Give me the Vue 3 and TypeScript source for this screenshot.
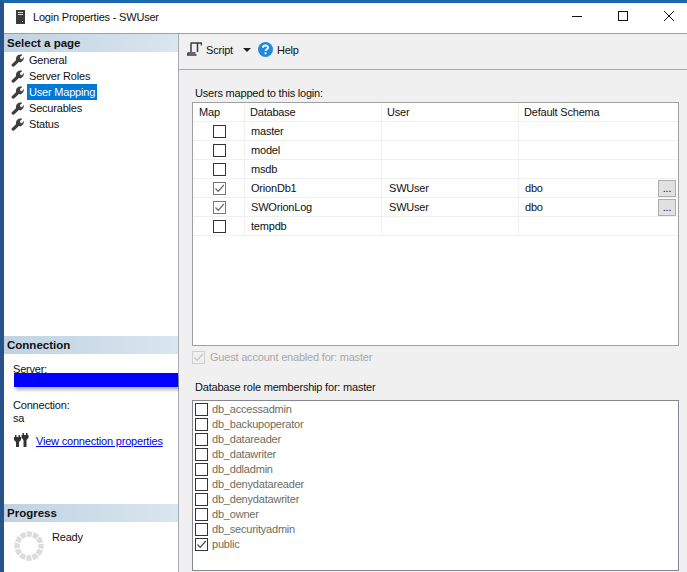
<script setup lang="ts">
const pages = ['General', 'Server Roles', 'User Mapping', 'Securables', 'Status']
const rows = [
  { map: false, db: 'master', user: '', schema: '' },
  { map: false, db: 'model', user: '', schema: '' },
  { map: false, db: 'msdb', user: '', schema: '' },
  { map: true, db: 'OrionDb1', user: 'SWUser', schema: 'dbo' },
  { map: true, db: 'SWOrionLog', user: 'SWUser', schema: 'dbo' },
  { map: false, db: 'tempdb', user: '', schema: '' },
]
const roles = [
  { name: 'db_accessadmin', on: false },
  { name: 'db_backupoperator', on: false },
  { name: 'db_datareader', on: false },
  { name: 'db_datawriter', on: false },
  { name: 'db_ddladmin', on: false },
  { name: 'db_denydatareader', on: false },
  { name: 'db_denydatawriter', on: false },
  { name: 'db_owner', on: false },
  { name: 'db_securityadmin', on: false },
  { name: 'public', on: true },
]
</script>

<template>
  <div class="window">
    <header class="titlebar">
      <svg class="app-icon" width="9" height="14" viewBox="0 0 9 14">
        <rect width="9" height="14" fill="#3c3c3c" />
        <rect x="2" y="2" width="5" height="1" fill="#ddd" />
        <rect x="2" y="4" width="5" height="1" fill="#ddd" />
        <rect x="6" y="11" width="1" height="1" fill="#fff" />
      </svg>
      <span class="title">Login Properties - SWUser</span>
      <div class="win-btns">
        <svg width="12" height="12" viewBox="0 0 12 12"><path d="M1 6.500h10" stroke="#111" fill="none" /></svg>
        <svg width="12" height="12" viewBox="0 0 12 12"><rect x="1.500" y="1.500" width="9" height="9" stroke="#111" fill="none" /></svg>
        <svg width="12" height="12" viewBox="0 0 12 12"><path d="M1 1l10 10M11 1L1 11" stroke="#111" fill="none" /></svg>
      </div>
    </header>
    <div class="body">
      <aside class="sidebar">
        <div class="section-head">Select a page</div>
        <ul class="pages">
          <li v-for="p in pages" :key="p" class="page">
            <svg width="13" height="13" viewBox="0 0 13 13" class="wrench">
              <path d="M.6 10.600 L5 6.300 C4.500 3.600 6 .8 9 .6 C10 .5 10.800 .7 11.400 1 L8.800 3 L9.400 4.800 L11 5.200 L12.700 2.800 C13.300 5.800 11 8.800 7.600 8.300 L3.200 12.600 C2 13.200 0 12 .6 10.600 Z" fill="#3f3f3f" />
            </svg>
            <span :class="{ selected: p === 'User Mapping' }">{{ p }}</span>
          </li>
        </ul>
        <div class="spacer"></div>
        <div class="section-head">Connection</div>
        <div class="conn">
          <div class="label">Server:</div>
          <div class="redact"></div>
          <div class="label conn-label">Connection:</div>
          <div class="label">sa</div>
          <div class="link-row">
            <svg width="15" height="15" viewBox="0 0 15 15">
              <path d="M0 4h7v3L5 9v5H2V9L0 7z M1 2h1.500v2H1z M4.500 2H6v2H4.500z" fill="#333" />
              <path d="M7.500 2h7v3l-2 2v7h-3V7l-2-2z M8.500 0H10v2H8.500z M12 0h1.500v2H12z" fill="#333" />
            </svg>
            <a class="link">View connection properties</a>
          </div>
        </div>
        <div class="section-head">Progress</div>
        <div class="progress">
          <svg width="30" height="30" viewBox="0 0 30 30">
            <circle cx="15" cy="15" r="12" fill="none" stroke="#dcdcdc" stroke-width="5.500" stroke-dasharray="5.200 1.080" stroke-dashoffset="2.600" />
          </svg>
          <span class="ready">Ready</span>
        </div>
      </aside>
      <main class="main">
        <div class="toolbar">
          <svg width="15" height="15" viewBox="0 0 15 15" class="script-icon">
            <path d="M3.500 1H14.500V3.500M4 1.500V10M10.500 1.500V10M.8 10.800V13H9.500M.8 11H8.500" fill="none" stroke="#3a3a3a" stroke-width="1.500" />
          </svg>
          <span class="tool-text">Script</span>
          <span class="caret"></span>
          <svg width="15" height="15" viewBox="0 0 16 16" class="help-icon">
            <circle cx="8" cy="8" r="8" fill="#1e8be0" />
            <path d="M5.300 6.200c0-3.200 5.400-3.200 5.400-.2 0 1.800-2.700 1.800-2.700 3.600" fill="none" stroke="#fff" stroke-width="2" />
            <rect x="7" y="11" width="2" height="2" fill="#fff" />
          </svg>
          <span class="tool-text">Help</span>
        </div>
        <div class="content">
          <div class="group-label">Users mapped to this login:</div>
          <div class="grid">
            <div class="grow ghead">
              <div class="c c-map">Map</div>
              <div class="c c-db head-db">Database</div>
              <div class="c c-user head-user">User</div>
              <div class="c c-schema head-schema">Default Schema</div>
            </div>
            <div v-for="r in rows" :key="r.db" class="grow">
              <div class="c c-map center">
                <span class="check" :class="{ on: r.map }">
                  <svg v-if="r.map" width="11" height="11" viewBox="0 0 11 11"><path d="M1.500 5.500 L4.200 8.300 L9.800 2" fill="none" stroke="#666" stroke-width="1.200" /></svg>
                </span>
              </div>
              <div class="c c-db">{{ r.db }}</div>
              <div class="c c-user">{{ r.user }}</div>
              <div class="c c-schema">
                <span>{{ r.schema }}</span>
                <span v-if="r.map" class="dots">...</span>
              </div>
            </div>
          </div>
          <div class="guest">
            <span class="guest-check">
              <svg width="11" height="11" viewBox="0 0 11 11"><path d="M1.500 5.500 L4.200 8.300 L9.800 2" fill="none" stroke="#c4c4c4" stroke-width="1.200" /></svg>
            </span>
            <span>Guest account enabled for: master</span>
          </div>
          <div class="group-label role-label">Database role membership for: master</div>
          <div class="roles">
            <div v-for="r in roles" :key="r.name" class="role">
              <span class="role-check">
                <svg v-if="r.on" width="11" height="11" viewBox="0 0 11 11"><path d="M1.500 5.500 L4.200 8.300 L9.800 2" fill="none" stroke="#444" stroke-width="1.200" /></svg>
              </span>
              <span class="role-name">{{ r.name }}</span>
            </div>
          </div>
        </div>
      </main>
    </div>
  </div>
</template>

<style>
html, body { margin: 0; background: #fff; }
</style>

<style scoped>
.window {
  width: 687px;
  height: 572px;
  box-sizing: border-box;
  border-left: 4px solid #27538a;
  border-top: 3px solid #1a66b0;
  overflow: hidden;
  display: flex;
  flex-direction: column;
  background: #fff;
  font-family: "Liberation Sans", Arial, sans-serif;
  font-size: 11px;
  letter-spacing: -0.2px;
  color: #111;
}
.titlebar {
  height: 31px;
  flex: none;
  display: flex;
  align-items: center;
  box-sizing: border-box;
  padding-left: 12px;
  border-bottom: 1px solid #a0a0a0;
}
.app-icon { margin-top: -3px; }
.title { margin-left: 8px; margin-top: -3px; }
.win-btns {
  margin-left: auto;
  display: flex;
  gap: 34px;
  padding-right: 12px;
  margin-top: -5px;
}
.body { flex: 1; display: flex; min-height: 0; }
.sidebar {
  width: 174px;
  flex: none;
  border-right: 1px solid #a9a9b3;
  display: flex;
  flex-direction: column;
}
.section-head {
  height: 18px;
  line-height: 18px;
  padding-left: 3px;
  font-weight: bold;
  font-size: 11.500px;
  letter-spacing: 0;
  color: #111;
  background: linear-gradient(to right, #c0d2e2, #dae6f0);
}
.pages { list-style: none; margin: 0; padding: 0 0 0 7px; }
.page { height: 16px; display: flex; align-items: center; }
.wrench { flex: none; }
.page span { margin-left: 3px; padding: 0 2px 0 2px; line-height: 16px; height: 16px; }
.selected { background: #0078d7; color: #fff; }
.spacer { height: 204px; flex: none; }
.conn { height: 150px; flex: none; padding-left: 9px; box-sizing: border-box; }
.label { height: 13px; line-height: 13px; }
.conn .label:first-child { margin-top: 9px; }
.redact {
  margin: -3px 0 0 1px;
  height: 14px;
  width: 164px;
  background: #0000ff;
  box-shadow: 2px 3px 3px rgba(0, 0, 0, .3);
}
.conn-label { margin-top: 12px; }
.link-row { display: flex; align-items: center; margin-top: 8px; margin-left: 1px; white-space: nowrap; }
.link { margin-left: 7px; color: #0000ee; text-decoration: underline; }
.progress { padding: 9px 0 0 10px; display: flex; }
.ready { margin-left: 8px; }
.main { flex: 1; min-width: 0; background: #f0f0f0; display: flex; flex-direction: column; }
.toolbar {
  height: 36px;
  flex: none;
  box-sizing: border-box;
  border-bottom: 1px solid #a9a9a9;
  display: flex;
  align-items: center;
  padding: 0 0 4px 8px;
}
.tool-text { line-height: 14px; }
.script-icon { margin-right: 4px; }
.caret {
  margin: 0 7px 0 10px;
  width: 0; height: 0;
  border-left: 4px solid transparent;
  border-right: 4px solid transparent;
  border-top: 4px solid #222;
}
.help-icon { margin-right: 4px; }
.content { flex: 1; padding: 0 8px 0 13px; min-height: 0; }
.group-label { height: 14px; line-height: 14px; padding-left: 3px; margin-top: 16px; color: #111; }
.grid {
  margin-top: 2px;
  height: 244px;
  box-sizing: border-box;
  background: #fff;
  border: 1px solid #a0a0a0;
}
.grow { height: 19px; display: flex; box-sizing: border-box; border-bottom: 1px solid #f0f0f0; }
.c {
  box-sizing: border-box;
  height: 18px;
  line-height: 18px;
  border-right: 1px solid #f0f0f0;
  padding-left: 6px;
  white-space: nowrap;
  position: relative;
}
.c-map { width: 52px; }
.c-db { width: 137px; }
.c-user { width: 137px; padding-left: 7px; }
.c-schema { flex: 1; border-right: 0; padding-left: 6px; }
.head-db { padding-left: 5px; }
.head-user { padding-left: 5px; }
.head-schema { padding-left: 5px; }
.center { display: flex; justify-content: center; align-items: center; padding: 0 0 0 1px; }
.check {
  width: 11px; height: 11px;
  border: 1px solid #333;
  background: #fff;
  display: flex; align-items: center; justify-content: center;
}
.check.on { border-color: #777; }
.check svg, .role-check svg, .guest-check svg { display: block; flex: none; }
.dots {
  position: absolute;
  right: 2px;
  top: 1px;
  width: 18px;
  height: 17px;
  box-sizing: border-box;
  background: #e1e1e1;
  border: 1px solid #adadad;
  line-height: 15px;
  text-align: center;
}
.guest {
  display: flex;
  align-items: center;
  height: 14px;
  margin-top: 4px;
  color: #a8a8a8;
}
.guest-check {
  width: 11px; height: 11px;
  border: 1px solid #cfcfcf;
  margin-right: 5px;
  display: flex; align-items: center; justify-content: center;
}
.role-label { margin-top: 16px; }
.roles {
  margin-top: 6px;
  height: 171px;
  box-sizing: border-box;
  background: #fff;
  border: 1px solid #828790;
  padding: 1px 0 0 2px;
}
.role { height: 15px; display: flex; align-items: center; }
.role-check {
  width: 11px; height: 11px; flex: none;
  border: 1px solid #333;
  display: flex; align-items: center; justify-content: center;
  margin-right: 4px;
}
.role-name { color: #6d6d5f; line-height: 15px; }
</style>
